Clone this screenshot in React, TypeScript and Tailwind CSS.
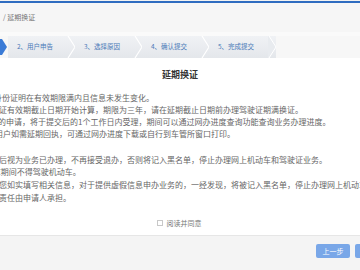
import * as React from "react";

const steps = ["2、用户申告", "3、选择原因", "4、确认提交", "5、完成提交"];

// 본문 줄: 왼쪽이 잘린 상태 그대로
const lines: { text: string; shift: string; gapBefore?: boolean }[] = [
  { text: "身份证明在有效期限满内且信息未发生变化。", shift: "-ml-[6px]" },
  { text: "证有效期截止日期开始计算，期限为三年，请在延期截止日期前办理驾驶证期满换证。", shift: "-ml-[1px]" },
  { text: "的申请，将于提交后的1个工作日内受理，期间可以通过网办进度查询功能查询业务办理进度。", shift: "-ml-[2px]" },
  { text: "用户如需延期回执，可通过网办进度下载或自行到车管所窗口打印。", shift: "-ml-[5px]" },
  { text: "后视为业务已办理，不再接受退办，否则将记入黑名单，停止办理网上机动车和驾驶证业务。", shift: "-ml-[1px]", gapBefore: true },
  { text: "E期间不得驾驶机动车。", shift: "-ml-[4px]" },
  { text: "您如实填写相关信息，对于提供虚假信息申办业务的，一经发现，将被记入黑名单，停止办理网上机动车和驾驶证业务。", shift: "-ml-[1px]" },
  { text: "责任由申请人承担。", shift: "-ml-[1px]" },
];

function Chevron({ last }: { last?: boolean }) {
  if (last) {
    return (
      <svg width="8" height="22" viewBox="0 0 8 22" className="shrink-0">
        <polygon points="0,0 1,0 8,11 1,22 0,22" fill="#e8ebef" />
        <polyline points="1,0 8,11 1,22" fill="none" stroke="#ffffff" strokeWidth="1" />
      </svg>
    );
  }
  return (
    <svg width="8" height="22" viewBox="0 0 8 22" className="shrink-0">
      <polyline points="1,0 8,11 1,22" fill="none" stroke="#ffffff" strokeWidth="1.2" />
    </svg>
  );
}

export default function App() {
  return (
    <div
      className="w-[360px] h-[270px] overflow-hidden bg-white flex flex-col"
      style={{ fontFamily: '"Noto Sans CJK SC", "Noto Sans", sans-serif' }}
    >
      {/* 상단 파란 선 */}
      <div className="h-[1px] bg-[#f2f2f2]" />
      <div className="h-[2px] bg-[#2f6cc0]" />

      {/* 경로 */}
      <div className="h-[29px] bg-[#f6f6f6] flex items-center pl-[3px] text-[7px] text-[#777]">
        / 延期换证
      </div>
      <div className="h-[4px] bg-[#fafafa]" />

      {/* 단계 표시 */}
      <div className="h-[22px] flex bg-[#f7f7f7]">
        <svg width="8" height="22" viewBox="0 0 8 22" className="shrink-0">
          <polygon points="0,3 2,3 7,11 2,19 0,19" fill="#3b7bd6" />
        </svg>
        {steps.map((s, i) => (
          <div
            key={s}
            className="w-[67px] shrink-0 flex items-center justify-between bg-gradient-to-b from-[#f0f2f5] to-[#e4e7eb]"
          >
            <span className="pl-[9px] text-[6.5px] text-[#4a7ab8] whitespace-nowrap">{s}</span>
            <Chevron last={i === steps.length - 1} />
          </div>
        ))}
      </div>

      {/* 본문 */}
      <div className="flex-1 flex flex-col">
        <h1 className="mt-[11px] text-center text-[9px] font-bold text-[#333] leading-[12px]">延期换证</h1>
        <div className="mt-[11px] flex flex-col text-[8px] leading-[12px] text-[#666] whitespace-nowrap">
          {lines.map((l, i) => (
            <p key={l.text} className={`${l.shift} ${l.gapBefore ? "mt-[14px]" : ""} ${i >= 6 ? "leading-[13px]" : ""}`}>
              {l.text}
            </p>
          ))}
        </div>
        <div className="mt-[14px] flex items-center justify-center gap-[4px] pr-[2px]">
          <span className="w-[6px] h-[6px] border border-[#c8c8c8] bg-white" />
          <span className="text-[7px] text-[#777] leading-[10px]">阅读并同意</span>
        </div>
      </div>

      {/* 하단 버튼 */}
      <div className="h-[35px] shrink-0 border-t border-[#e6e6e6] bg-[#f4f4f4] flex items-start justify-end gap-[5px] pt-[8px] -mr-[29px]">
        <button className="w-[34px] h-[14px] rounded-[2px] bg-[#79a7e8] text-white text-[7px] leading-[14px]">上一步</button>
        <button className="w-[34px] h-[14px] rounded-[2px] bg-[#79a7e8] text-white text-[7px] leading-[14px]">下一步</button>
      </div>
    </div>
  );
}
